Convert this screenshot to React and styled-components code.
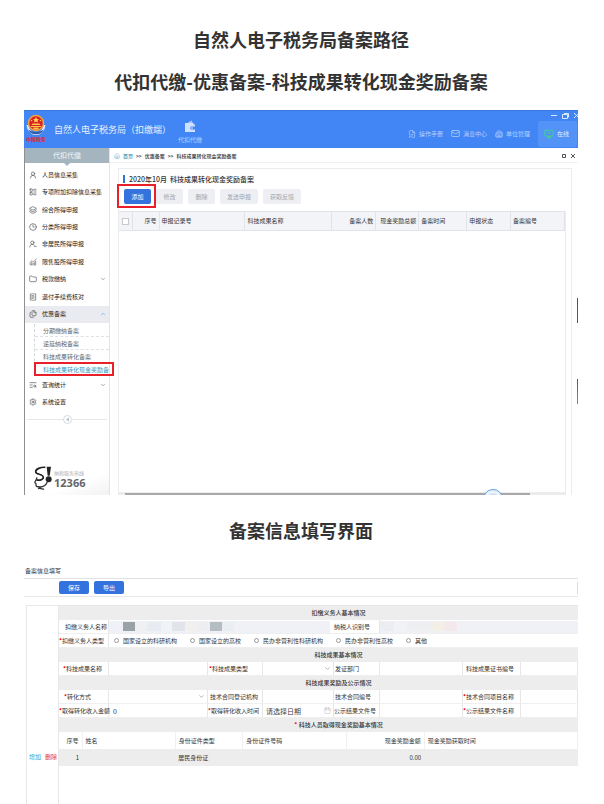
import React from 'react'
import styled, { createGlobalStyle, css } from 'styled-components'
import {
  Building2,
  Calendar,
  ChartNoAxesCombined,
  ChevronDown,
  ChevronUp,
  Clock3,
  Files,
  FilePen,
  Folder,
  House,
  Layers,
  LayoutList,
  Mail,
  MonitorCheck,
  ReceiptText,
  Settings,
  TextSearch,
  UserRound,
  UserRoundMinus,
} from 'lucide-react'

const GlobalStyle = createGlobalStyle`
  * {
    box-sizing: border-box;
  }
  body {
    margin: 0;
    background: #fff;
    color: #333;
    font-family: 'Noto Sans CJK SC', 'Noto Sans', sans-serif;
    font-size: 6px;
    line-height: 10px;
  }
  button, input, select {
    font: inherit;
    color: inherit;
    margin: 0;
    padding: 0;
    border: 0;
    background: none;
  }
  a {
    color: inherit;
    text-decoration: none;
  }
  ul {
    list-style: none;
    margin: 0;
    padding: 0;
  }
  svg {
    display: block;
    flex: none;
  }
`

const Page = styled.div`
  min-height: 100vh;
  display: flex;
  flex-direction: column;
  padding: 18px 26px 0 24px;
`

const Heading = styled.h2`
  margin: 0;
  text-align: center;
  font-size: 18px;
  font-weight: 700;
  line-height: 42px;
`

/* ---------- client window ---------- */

const ClientWindow = styled.section`
  position: relative;
  margin: 8px 0 14px;
  overflow: hidden;
`

const TopBar = styled.header`
  display: flex;
  height: 38px;
  background: #4285f4;
  border-top: 1px solid #3a76dc;
  color: #e6f0ff;
`

const Brand = styled.div`
  display: flex;
  flex-direction: column;
  align-items: center;
  width: 24px;
  padding-top: 3px;
  color: #e0262b;
  font-size: 5px;
  font-weight: 700;
  line-height: 7px;
`

const ProductName = styled.h1`
  margin: 0 0 0 6px;
  font-size: 9px;
  font-weight: 400;
  line-height: 38px;
  white-space: nowrap;
`

const Module = styled.a`
  display: flex;
  flex-direction: column;
  align-items: center;
  gap: 2px;
  margin-left: 7px;
  padding-top: 9px;
  color: #b5d2ff;
`

const TopRight = styled.div`
  flex: 1;
  display: flex;
  flex-direction: column;
`

const WindowButtons = styled.div`
  display: flex;
  justify-content: flex-end;
  gap: 5px;
  height: 9px;
  padding-top: 1px;
  button {
    height: 7px;
  }
`

const TopMenu = styled.nav`
  display: flex;
  justify-content: flex-end;
  align-items: center;
  gap: 8px;
  height: 27px;
  padding-right: 1px;
`

const TopLink = styled.a`
  display: flex;
  align-items: center;
  gap: 3px;
  color: #b5d2ff;
  ${(p) =>
    p.$online &&
    css`
      height: 26px;
      padding: 0 8px 0 6px;
      color: #e6f0ff;
      background: #5392f6;
      border-radius: 2px;
      svg {
        color: #3be07c;
      }
    `}
`

const WindowBody = styled.div`
  display: grid;
  grid-template-columns: 86px 1fr;
  height: 347px;
`

const Sidebar = styled.aside`
  display: flex;
  flex-direction: column;
  border-left: 1px solid #8f8f8f;
  border-right: 1px solid #e4e4e8;
`

const SideTitle = styled.div`
  position: relative;
  height: 15px;
  margin-bottom: 3px;
  background: #a5b5bf;
  color: #f4f7f9;
  font-size: 7px;
  line-height: 15px;
  text-align: center;
  &::after {
    content: '';
    position: absolute;
    top: 15px;
    left: 50%;
    margin-left: -3px;
    border: 3px solid transparent;
    border-top-color: #a5b5bf;
    border-bottom: 0;
  }
`

const SideList = styled.ul`
  display: grid;
  grid-auto-rows: 1fr;
  height: ${(p) => p.$height}px;
`

const SideLink = styled.a`
  display: flex;
  align-items: center;
  gap: 5px;
  height: 100%;
  padding: 0 3px 0 4px;
  background: ${(p) => (p.$open ? '#e9ebf0' : 'none')};
  color: #222;
  white-space: nowrap;
  span {
    flex: 1;
  }
  > svg {
    color: #555;
  }
`

const SubList = styled.ul`
  margin: 1px 0 0 9px;
  border-left: 1px dashed #d3d8dc;
`

const SubItem = styled.li`
  position: relative;
  height: 13px;
  padding-left: 8px;
  line-height: 13px;
  border-bottom: 1px dashed #dde1e4;
  color: ${(p) => (p.$active ? '#3a94b5' : '#666')};
  a {
    display: block;
    white-space: nowrap;
  }
`

const Callout = styled.span`
  position: absolute;
  inset: ${(p) => p.$inset};
  border: 2px solid #e8202a;
  pointer-events: none;
`

const Collapse = styled.div`
  display: flex;
  align-items: center;
  height: 18px;
  margin: 0 2px;
  &::before,
  &::after {
    content: '';
    flex: 1;
    height: 1px;
    background: #e4e7e9;
  }
  button {
    width: 9px;
    height: 9px;
    border: 1px solid #d5dbdf;
    border-radius: 50%;
  }
`

const Hotline = styled.div`
  display: flex;
  align-items: center;
  gap: 2px;
  margin-top: auto;
  padding: 0 0 3px 9px;
  height: 30px;
  background: linear-gradient(160deg, #fff 60%, #f2f2f2);
  color: #b0b0b0;
  font-size: 5px;
  line-height: 8px;
  strong {
    display: block;
    color: #666;
    font-family: 'Noto Sans', sans-serif;
    font-size: 11px;
    line-height: 11px;
  }
`

const Content = styled.main`
  display: flex;
  flex-direction: column;
  min-width: 0;
`

const Crumbs = styled.nav`
  display: flex;
  align-items: center;
  gap: 3px;
  height: 15px;
  padding: 1px 3px 0 4px;
  border-bottom: 1px solid #f1f1f3;
  font-size: 5px;
  font-weight: 500;
  white-space: nowrap;
  a:first-of-type {
    color: #2d8fa9;
  }
  > svg {
    color: #6aa9c8;
  }
`

const CrumbTools = styled.span`
  display: flex;
  gap: 5px;
  margin-left: auto;
`

const Panel = styled.div`
  flex: 1;
  display: flex;
  flex-direction: column;
  margin: 5px 6px 0 8px;
  border: 1px solid #ececef;
  border-bottom: 0;
`

const PanelTitle = styled.h3`
  margin: 6px 0 3px 4px;
  padding-left: 4px;
  border-left: 2px solid #2f73de;
  font-size: 7px;
  font-weight: 500;
  line-height: 9px;
  height: 8px;
  white-space: pre;
`

const Toolbar = styled.div`
  display: flex;
  gap: 5px;
  padding: ${(p) => p.$pad};
`

const Button = styled.button`
  height: ${(p) => p.$height || 15}px;
  min-width: ${(p) => p.$width || 27}px;
  padding: 0 7px;
  border-radius: 2px;
  background: ${(p) => (p.$primary ? '#3473dd' : '#eeeff3')};
  color: ${(p) => (p.$primary ? '#fff' : '#a3a5aa')};
`

const Anchor = styled.span`
  position: relative;
  display: flex;
`

const TableArea = styled.div`
  flex: 1;
  margin-right: 5px;
  border-right: 1px solid #ececef;
`

const RecordTable = styled.table`
  width: 100%;
  table-layout: fixed;
  border-collapse: collapse;
  th {
    height: 19px;
    padding: 0 2px;
    background: #f3f4f8;
    border: 1px solid #e1e3e9;
    border-left: 0;
    font-weight: 400;
    text-align: left;
    white-space: nowrap;
  }
  th.end {
    text-align: right;
  }
  input {
    display: block;
    appearance: none;
    width: 7px;
    height: 7px;
    margin-left: 1px;
    border: 1px solid #c6c8cc;
    background: #fff;
  }
`

const ScrollTrack = styled.div`
  height: 3px;
  margin-right: 5px;
  padding: 1px 36px 0 6px;
  background: #ececec;
  div {
    height: 2px;
    background: #a9a9a9;
  }
`

const Bubble = styled.span`
  position: absolute;
  right: 75px;
  bottom: -14px;
  width: 20px;
  height: 20px;
  border: 1px solid #5aa0e4;
  border-radius: 50%;
  background: radial-gradient(#cfd9e4 35%, #eaf2fa 50%);
`

const EdgeMark = styled.span`
  position: absolute;
  right: 0;
  top: ${(p) => p.$top}px;
  width: 1px;
  height: 25px;
  background: linear-gradient(#555, ${(p) => p.$end});
`

/* ---------- filing form ---------- */

const FormWindow = styled.form`
  flex: 1;
  display: flex;
  flex-direction: column;
  margin-top: 13px;
  overflow: hidden;
`

const FormTitle = styled.div`
  height: 15px;
  padding-left: 1px;
  line-height: 13px;
  border-bottom: 1px solid #e2e2e2;
`

const FormToolbar = styled.div`
  display: flex;
  align-items: center;
  gap: 5px;
  height: 18px;
  margin-bottom: 8px;
  padding-left: 35px;
  border-bottom: 1px solid #e8e8e8;
  &::after {
    content: '';
    width: 1px;
    height: 12px;
    margin-left: auto;
    background: #f6d9ab;
  }
`

const FormBody = styled.div`
  flex: 1;
  display: grid;
  grid-template-columns: 32px 1fr;
  grid-template-rows: auto 1fr;
  margin-left: 2px;
  border-left: 1px solid #e8e8e8;
  border-top: 1px solid #e8e8e8;
`

const Side = styled.div`
  border-right: 1px solid #e8e8e8;
`

const RowActions = styled(Side)`
  display: flex;
  align-items: flex-start;
  gap: 4px;
  padding: 20px 0 0 2px;
  white-space: nowrap;
  a {
    color: #2f9fd0;
  }
  a + a {
    color: #e0383e;
  }
`

const Section = styled.h4`
  margin: 0;
  height: 14px;
  background: #ededed;
  font-size: 6px;
  font-weight: 500;
  line-height: 14px;
  padding-left: 40px;
  text-align: center;
`

const Row = styled.div`
  display: grid;
  grid-template-columns: ${(p) =>
    p.$columns || '50px 99fr 55px 71fr 46px 83fr 58px 57fr'};
  height: 14px;
  border-bottom: 1px solid #efefef;
`

const Label = styled.label`
  padding-right: ${(p) => p.$end || 5}px;
  border-right: 1px solid #e6e6e6;
  line-height: 13px;
  text-align: right;
  white-space: nowrap;
`

const Star = styled.i`
  color: #e00;
  font-style: normal;
  font-weight: 700;
`

const Cell = styled.div`
  position: relative;
  display: flex;
  min-width: 0;
  border-right: 1px solid #e6e6e6;
  input,
  select {
    width: 100%;
    height: 13px;
    padding-left: ${(p) => p.$pad || 3}px;
    font-size: 7px;
    appearance: none;
  }
  input::placeholder {
    color: #444;
    opacity: 1;
  }
  svg {
    position: absolute;
    right: 2px;
    top: 3px;
    color: #888;
    pointer-events: none;
  }
`

const Masked = styled.output`
  display: flex;
  height: 12px;
  margin-top: 1px;
  background: #f0f1f6;
`

const Block = styled.span`
  width: ${(p) => p.$width}px;
  height: 9px;
  margin-top: 1px;
  background: ${(p) => p.$color};
`

const Radios = styled.div`
  display: flex;
  align-items: center;
  gap: 13px;
  padding-left: 5px;
  white-space: nowrap;
  label {
    display: flex;
    align-items: center;
    gap: 4px;
  }
  input {
    appearance: none;
    width: 5px;
    height: 5px;
    border: 1px solid #999;
    border-radius: 50%;
  }
`

const PeopleTable = styled.table`
  width: 100%;
  table-layout: fixed;
  border-collapse: collapse;
  th,
  td {
    height: 17px;
    padding: 0 4px 0 3px;
    border-right: 1px solid #f0f0f0;
    text-align: left;
    font-weight: 400;
    white-space: nowrap;
  }
  td {
    background: #ededed;
    border: 0;
  }
  .end {
    padding: 0 3px;
    text-align: right;
  }
`

const menu = [
  ['人员信息采集', UserRound],
  ['专项附加扣除信息采集', LayoutList],
  ['综合所得申报', Layers],
  ['分类所得申报', Clock3],
  ['非居民所得申报', UserRoundMinus],
  ['限售股所得申报', ChartNoAxesCombined],
  ['税款缴纳', Folder, 'down'],
  ['退付手续费核对', ReceiptText],
  ['优惠备案', Files, 'up'],
]
const moreMenu = [
  ['查询统计', TextSearch, 'down'],
  ['系统设置', Settings],
]
const subMenu = ['分期缴纳备案', '递延纳税备案', '科技成果转化备案', '科技成果转化现金奖励备']

const recordColumns = [
  ['序号', 27, 'end'],
  ['申报记录号', 86],
  ['科技成果名称', 87],
  ['备案人数', 44, 'end'],
  ['现金奖励总额', 43, 'end'],
  ['备案时间', 48],
  ['申报状态', 44],
  ['备案编号', 54],
]

const payerTypes = ['国家设立的科研机构', '国家设立的高校', '民办非营利性科研机构', '民办非营利性高校', '其他']

const nameBlocks = [
  [14, '#f0f1f6'], [12, '#98a2a7'], [12, '#eef0f4'], [14, '#e8ebf2'], [11, '#f2f3f7'],
  [13, '#e1e4e8'], [12, '#f3efec'], [13, '#eceef2'], [12, '#b4bec2'], [12, '#e9eef1'],
]
const idBlocks = [[14, '#ececf3'], [13, '#f1f1f6'], [25, '#edeff0'], [12, '#f3efe5'], [13, '#f4e9ea']]

function Emblem() {
  return (
    <svg width="20" height="21" viewBox="0 0 40 42">
      <path d="M3 22C4 34 12 40 20 40s16-6 17-18" fill="none" stroke="#dfe9f5" strokeWidth="4" />
      <path d="M5 31c8 7 22 7 30 0l-2 5c-7 6-19 6-26 0z" fill="#2c5aa5" />
      <circle cx="20" cy="18" r="15" fill="#d6202a" stroke="#f0a63a" strokeWidth="3" />
      <path d="M20 6l2 4 4 .4-3 2.8 1 4-4-2.2-4 2.2 1-4-3-2.8 4-.4z" fill="#ffd34d" />
      <path d="M10 24h20v2H10zM13 19h14l2 3H11zM15 27h10v4H15z" fill="#ffc741" />
      <circle cx="11" cy="13" r="1.5" fill="#ffd34d" />
      <circle cx="29" cy="13" r="1.5" fill="#ffd34d" />
    </svg>
  )
}

function Wallet() {
  return (
    <svg width="12" height="13" viewBox="0 0 24 26">
      <path d="M5 7l10-6 3 6z" fill="#a5c8ff" />
      <path d="M2 6h17v3h3v15H2z" fill="#cfe1ff" />
      <path d="M14 13h9v6h-9l-2-3z" fill="#4285f4" />
      <circle cx="16" cy="16" r="1.5" fill="#fff" />
    </svg>
  )
}

function HotlineLogo() {
  return (
    <svg width="18" height="25" viewBox="0 0 54 75">
      <path d="M34 4C20 3 5 9 5 17c0 9 23 7 23 17 0 8-12 10-21 7" fill="none" stroke="#222" strokeWidth="5" />
      <path d="M38 2h13l-4 27h-6z" fill="#222" />
      <circle cx="44" cy="40" r="9" fill="#222" />
      <path d="M8 34c2 7-7 12-5 16 2 2 4 2 3 6 0 5 2 7 10 6M40 48c-5 11-12 16-24 15M12 68c7-5 12 5 18 0" fill="none" stroke="#333" strokeWidth="4" />
    </svg>
  )
}

function MenuItem({ item }) {
  const [text, Icon, arrow] = item
  return (
    <li>
      <SideLink href="#" $open={arrow === 'up'}>
        <Icon size={8} strokeWidth={2} />
        <span>{text}</span>
        {arrow === 'down' && <ChevronDown size={6} />}
        {arrow === 'up' && <ChevronUp size={6} color="#3b8fc4" />}
      </SideLink>
    </li>
  )
}

function Field({ id, label, required, select, date, value, end, pad }) {
  return (
    <>
      <Label htmlFor={id} $end={end}>
        {required && <Star>*</Star>}
        {label}
      </Label>
      <Cell $pad={pad}>
        {select ? <select id={id} /> : <input id={id} defaultValue={value} placeholder={date && '请选择日期'} />}
        {select && <ChevronDown size={7} />}
        {date && <Calendar size={7} strokeWidth={1} />}
      </Cell>
    </>
  )
}

function Client() {
  return (
    <ClientWindow>
      <TopBar>
        <Brand>
          <Emblem />
          中国税务
        </Brand>
        <ProductName>自然人电子税务局（扣缴端）</ProductName>
        <Module href="#">
          <Wallet />
          代扣代缴
        </Module>
        <TopRight>
          <WindowButtons>
            <button type="button" aria-label="最小化">
              <svg width="6" height="7" viewBox="0 0 6 7"><path d="M0 3.5h6" stroke="#dce9ff" /></svg>
            </button>
            <button type="button" aria-label="还原">
              <svg width="7" height="7" viewBox="0 0 7 7"><path d="M2 1.5h4.500v4M.5 2.500h5v4h-5z" fill="none" stroke="#dce9ff" /></svg>
            </button>
            <button type="button" aria-label="关闭">
              <svg width="4" height="7" viewBox="0 0 4 7"><path d="M0 1l5 5M0 6l5-5" stroke="#dce9ff" /></svg>
            </button>
          </WindowButtons>
          <TopMenu>
            <TopLink href="#"><FilePen size={8} />操作手册</TopLink>
            <TopLink href="#"><Mail size={9} />消息中心</TopLink>
            <TopLink href="#"><Building2 size={8} />单位管理</TopLink>
            <TopLink href="#" $online><MonitorCheck size={10} />在线</TopLink>
          </TopMenu>
        </TopRight>
      </TopBar>

      <WindowBody>
        <Sidebar>
          <SideTitle>代扣代缴</SideTitle>
          <SideList $height={157}>
            {menu.map((item) => <MenuItem key={item[0]} item={item} />)}
          </SideList>
          <SubList>
            {subMenu.map((text, i) => (
              <SubItem key={text} $active={i === 3}>
                <a href="#">{text}</a>
                {i === 3 && <Callout $inset="-1px -5px -1px -1px" />}
              </SubItem>
            ))}
          </SubList>
          <SideList $height={34}>
            {moreMenu.map((item) => <MenuItem key={item[0]} item={item} />)}
          </SideList>
          <Collapse>
            <button type="button" aria-label="收起">
              <svg width="7" height="7" viewBox="0 0 7 7"><path d="M5 1.500v4L2 3.500z" fill="#b5c0c8" /></svg>
            </button>
          </Collapse>
          <Hotline>
            <HotlineLogo />
            <div>
              纳税服务热线
              <strong>12366</strong>
            </div>
          </Hotline>
        </Sidebar>

        <Content>
          <Crumbs>
            <House size={6} />
            <a href="#">首页</a>
            <span>&gt;&gt;</span>
            <a href="#">优惠备案</a>
            <span>&gt;&gt;</span>
            <span>科技成果转化现金奖励备案</span>
            <CrumbTools>
              <svg width="4" height="4" viewBox="0 0 4 4"><path d="M.5.5h3v3h-3z" fill="none" stroke="#555" /></svg>
              <svg width="4" height="4" viewBox="0 0 4 4"><path d="M0 0l4 4M0 4l4-4" stroke="#555" /></svg>
            </CrumbTools>
          </Crumbs>
          <Panel>
            <PanelTitle>2020年10月  科技成果转化现金奖励备案</PanelTitle>
            <Toolbar $pad="3px 5px 7px">
              <Anchor>
                <Button type="button" $primary>添加</Button>
                <Callout $inset="-5px -5px -4px -7px" />
              </Anchor>
              <Button type="button">修改</Button>
              <Button type="button">删除</Button>
              <Button type="button">发送申报</Button>
              <Button type="button">获取反馈</Button>
            </Toolbar>
            <TableArea>
              <RecordTable>
                <colgroup>
                  <col style={{ width: 13 }} />
                  {recordColumns.map(([name, width]) => (
                    <col key={name} style={{ width: `${(width / 446) * 100}%` }} />
                  ))}
                </colgroup>
                <thead>
                  <tr>
                    <th><input type="checkbox" aria-label="全选" /></th>
                    {recordColumns.map(([name, , align]) => (
                      <th key={name} className={align}>{name}</th>
                    ))}
                  </tr>
                </thead>
              </RecordTable>
            </TableArea>
            <ScrollTrack><div /></ScrollTrack>
          </Panel>
        </Content>
      </WindowBody>
      <EdgeMark $top={188} $end="#555" />
      <EdgeMark $top={269} $end="#6f9a78" />
      <Bubble />
    </ClientWindow>
  )
}

function FilingForm() {
  return (
    <FormWindow>
      <FormTitle>备案信息填写</FormTitle>
      <FormToolbar>
        <Button type="button" $primary $width={30} $height={13}>保存</Button>
        <Button type="button" $primary $width={30} $height={13}>导出</Button>
      </FormToolbar>
      <FormBody>
        <Side />
        <div>
          <Section>扣缴义务人基本情况</Section>
          <Row $columns="50px 221fr 50px 198fr">
            <Label htmlFor="payer" $end={1}>扣缴义务人名称</Label>
            <Masked id="payer">
              {nameBlocks.map(([width, color], i) => <Block key={i} $width={width} $color={color} />)}
            </Masked>
            <Label htmlFor="taxno" $end={9}>纳税人识别号</Label>
            <Masked id="taxno">
              {idBlocks.map(([width, color], i) => <Block key={i} $width={width} $color={color} />)}
            </Masked>
          </Row>
          <Row $columns="50px 1fr">
            <Label as="span" id="payer-type" $end={4}><Star>*</Star>扣缴义务人类型</Label>
            <Radios role="radiogroup" aria-labelledby="payer-type">
              {payerTypes.map((text) => (
                <label key={text}>
                  <input type="radio" name="payerType" />
                  {text}
                </label>
              ))}
            </Radios>
          </Row>
          <Section>科技成果基本情况</Section>
          <Row>
            <Field id="achName" label="科技成果名称" required end={6} />
            <Field id="achType" label="科技成果类型" required select end={14} />
            <Field id="issuer" label="发证部门" end={20} />
            <Field id="certNo" label="科技成果证书编号" end={6} />
          </Row>
          <Section>科技成果奖励及公示情况</Section>
          <Row>
            <Field id="method" label="转化方式" required select end={17} />
            <Field id="registrar" label="技术合同登记机构" end={4} />
            <Field id="contractNo" label="技术合同编号" end={8} />
            <Field id="project" label="技术合同项目名称" required end={6} />
          </Row>
          <Row>
            <Field id="income" label="取得转化收入金额" required value="0" end={1} pad={4} />
            <Field id="incomeDate" label="取得转化收入时间" required date end={4} />
            <Field id="noticeNo" label="公示结果文件号" end={3} />
            <Field id="noticeName" label="公示结果文件名称" required end={6} />
          </Row>
          <Section><Star>*</Star> 科技人员取得现金奖励基本情况</Section>
        </div>
        <RowActions>
          <a href="#">增加</a>
          <a href="#">删除</a>
        </RowActions>
        <div>
          <PeopleTable>
            <colgroup>
              <col style={{ width: 23 }} />
              <col style={{ width: '18%' }} />
              <col style={{ width: '13%' }} />
              <col style={{ width: '20%' }} />
              <col style={{ width: '15%' }} />
              <col />
            </colgroup>
            <thead>
              <tr>
                <th className="end">序号</th>
                <th>姓名</th>
                <th>身份证件类型</th>
                <th>身份证件号码</th>
                <th className="end">现金奖励金额</th>
                <th>现金奖励获取时间</th>
              </tr>
            </thead>
            <tbody>
              <tr>
                <td className="end">1</td>
                <td />
                <td>居民身份证</td>
                <td />
                <td className="end">0.00</td>
                <td />
              </tr>
            </tbody>
          </PeopleTable>
        </div>
      </FormBody>
    </FormWindow>
  )
}

export default function App() {
  return (
    <>
      <GlobalStyle />
      <Page>
        <Heading>自然人电子税务局备案路径</Heading>
        <Heading>代扣代缴-优惠备案-科技成果转化现金奖励备案</Heading>
        <Client />
        <Heading>备案信息填写界面</Heading>
        <FilingForm />
      </Page>
    </>
  )
}
